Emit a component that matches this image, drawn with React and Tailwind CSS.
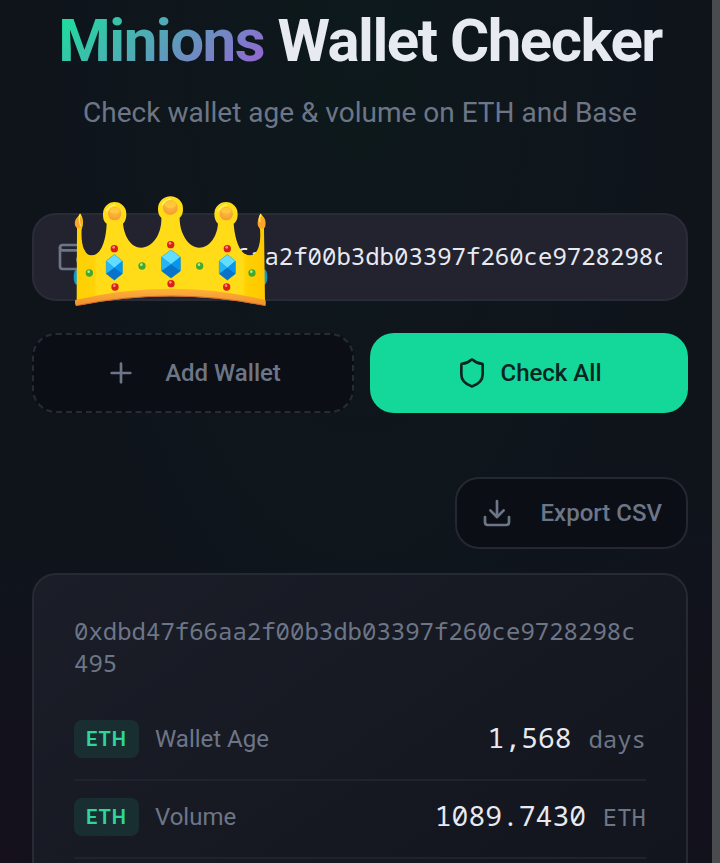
import { useState } from 'react';
import { Wallet, Plus, Shield, Download } from 'lucide-react';

const ADDRESS = '0xdbd47f66aa2f00b3db03397f260ce9728298c495';

const stats = [
  { chain: 'ETH', label: 'Wallet Age', value: '1,568', unit: 'days' },
  { chain: 'ETH', label: 'Volume', value: '1089.7430', unit: 'ETH' },
];

const redGems = [[283, 191], [452, 179], [622, 191], [285, 306], [453, 296], [620, 306]];
const greenGems = [[208, 264], [366, 243], [539, 243], [696, 264]];
const blueGems = [
  { x: 283, y: 247, w: 24, h: 38 },
  { x: 453, y: 237, w: 28, h: 42 },
  { x: 622, y: 247, w: 24, h: 38 },
];

function Gem({ x, y, w, h }) {
  const q = h / 2;
  return (
    <g>
      <path d={`M${x} ${y - h}L${x + w} ${y - q}V${y + q}L${x} ${y + h}L${x - w} ${y + q}V${y - q}Z`} fill="#0a9be8" stroke="#5aa58c" strokeWidth="3" />
      <path d={`M${x} ${y - h}L${x + w} ${y - q}L${x} ${y + 1}L${x - w} ${y - q}Z`} fill="#62dcff" />
      <path d={`M${x - w} ${y - q}L${x} ${y + 1}L${x - w} ${y + q}Z`} fill="#25b5f5" />
      <path d={`M${x + w} ${y - q}L${x} ${y + 1}L${x + w} ${y + q}Z`} fill="#0795ee" />
      <path d={`M${x} ${y + 1}L${x + w} ${y + q}L${x} ${y + h}L${x - w} ${y + q}Z`} fill="#0873c9" />
    </g>
  );
}

function Crown({ className }) {
  return (
    <svg viewBox="156 30 588 336" className={className} aria-hidden="true">
      <defs>
        <linearGradient id="crown-body" x1="0" x2="1" y1="0" y2="0">
          <stop offset="0" stopColor="#ffd000" />
          <stop offset="0.1" stopColor="#ffd20a" />
          <stop offset="0.11" stopColor="#ffdc17" />
          <stop offset="0.88" stopColor="#ffdc17" />
          <stop offset="0.9" stopColor="#ffd000" />
          <stop offset="1" stopColor="#ffc800" />
        </linearGradient>
        <linearGradient id="crown-band" x1="0" x2="0" y1="0" y2="1">
          <stop offset="0" stopColor="#ffb13b" />
          <stop offset="1" stopColor="#ee8f2c" />
        </linearGradient>
        <radialGradient id="crown-ball" cx="0.5" cy="0.3" r="0.7">
          <stop offset="0" stopColor="#ffc443" />
          <stop offset="1" stopColor="#f59a2e" />
        </radialGradient>
      </defs>
      <ellipse cx="170" cy="276" rx="9" ry="23" fill="#1499cf" />
      <ellipse cx="733" cy="276" rx="9" ry="23" fill="#1499cf" />
      <path
        d="M170 350L171 130C165 116 166 99 181 86C191 99 191 118 185 133C182 176 192 211 214 211C244 211 258 166 260 116C250 109 249 98 249 86A35 35 0 0 1 319 86C319 98 317 108 309 116C313 154 333 188 363 188C400 188 426 144 424 98C416 91 414 82 414 71A37 37 0 0 1 489 71C489 82 487 91 479 98C478 144 505 188 538 188C569 188 591 154 594 116C586 108 583 98 583 86A35 35 0 0 1 653 86C653 98 651 109 641 116C645 166 660 211 690 211C713 211 724 176 720 133C712 118 712 99 722 86C736 99 738 116 732 130L735 350Q453 292 170 350Z"
        fill="url(#crown-body)"
      />
      <path d="M175 96C166 99 162 113 166 123C171 132 184 133 187 121Q190 107 182 96Z" fill="#f9a62b" />
      <path d="M722 96C714 99 711 112 714 122C719 134 733 134 736 123Q739 107 731 96Z" fill="#f9a62b" />
      <path d="M180 88Q175 104 182 122" stroke="#ffe970" strokeWidth="4" strokeLinecap="round" fill="none" />
      <path d="M722 88Q717 101 719 110" stroke="#ffe970" strokeWidth="4" strokeLinecap="round" fill="none" />
      {[[284, 86, 20], [451, 68, 22], [619, 86, 20]].map(([x, y, r]) => (
        <g key={x}>
          <circle cx={x} cy={y} r={r} fill="url(#crown-ball)" />
          <ellipse cx={x} cy={y - 9} rx={r - 5} ry={r - 12} fill="#ffc83a" />
          <path d={`M${x - 24} ${y - 9}Q${x - 15} ${y - 24} ${x} ${y - 26}`} stroke="#fff176" strokeWidth="5" strokeLinecap="round" fill="none" />
        </g>
      ))}
      <path d="M166 345Q453 277 736 345Q739 355 736 363Q453 304 168 363Q163 355 166 345Z" fill="url(#crown-band)" />
      <path d="M178 360Q453 306 728 360" stroke="#ce6b30" strokeWidth="3" fill="none" />
      {redGems.map(([x, y]) => (
        <g key={`${x}-${y}`}>
          <circle cx={x} cy={y} r="11" fill="#d91f1b" />
          <circle cx={x - 2} cy={y - 4} r="4" fill="#ff8a80" />
        </g>
      ))}
      {greenGems.map(([x, y]) => (
        <g key={x}>
          <circle cx={x} cy={y} r="11" fill="#43a82e" />
          <circle cx={x - 2} cy={y - 4} r="4" fill="#b4ec91" />
        </g>
      ))}
      {blueGems.map((gem) => <Gem key={gem.x} {...gem} />)}
    </svg>
  );
}

function StatRow({ chain, label, value, unit }) {
  return (
    <div className="flex items-center justify-between gap-4 border-b-2 border-[#20222c] pt-4 pb-5">
      <dt className="flex items-center gap-4 text-2xl leading-10 text-[#6d7687]">
        <span className="rounded-lg bg-[#182e31] px-3 py-1 text-xl leading-[30px] font-semibold tracking-wider text-[#2fd69c]">
          {chain}
        </span>
        {label}
      </dt>
      <dd className="pb-1 font-['Droid_Sans_Mono','Noto_Sans_Mono','DejaVu_Sans_Mono',monospace] text-[28px] leading-9 whitespace-nowrap text-[#e8eaf2]">
        {value} <span className="text-2xl leading-none text-[#6d7687]">{unit}</span>
      </dd>
    </div>
  );
}

export default function App() {
  const [address, setAddress] = useState(ADDRESS);

  return (
    <div className="flex min-h-screen bg-[#0f141b] bg-[radial-gradient(ellipse_at_50%_0%,#0d191c_0%,transparent_60%),radial-gradient(ellipse_at_0%_100%,#15101b_0%,transparent_25%),radial-gradient(ellipse_at_100%_90%,#14111c_0%,transparent_25%)] font-[Roboto,sans-serif]">
      <main className="flex min-w-0 flex-1 flex-col pt-[5px] pr-6 pl-8">
        {/* Header */}
        <header className="text-center">
          <h1 className="text-6xl leading-[72px] font-bold tracking-tight whitespace-nowrap text-[#e8eaf2]">
            <span className="bg-linear-135/srgb from-[#14e69a] to-[#9b5fd6] bg-clip-text text-transparent">Minions</span> Wallet Checker
          </h1>
          <p className="mt-4 text-[28px] leading-10 text-[#6d7687]">Check wallet age &amp; volume on ETH and Base</p>
        </header>

        {/* Address input */}
        <div className="relative mt-20">
          <Wallet size={32} className="absolute top-7 left-6 text-[#6d7687]" aria-hidden="true" />
          <input
            type="text"
            aria-label="Wallet address"
            value={address}
            onChange={(e) => setAddress(e.target.value)}
            className="block h-[88px] w-full rounded-3xl border-2 border-[#292b36] bg-[#22232f] pr-6 pb-1 pl-[72px] font-['Droid_Sans_Mono','Noto_Sans_Mono','DejaVu_Sans_Mono',monospace] text-2xl text-[#e8eaf2] outline-none"
          />
          <Crown className="pointer-events-none absolute -top-[18px] left-10 w-[196px]" />
        </div>

        {/* Actions */}
        <div className="mt-8 flex gap-4 text-2xl font-medium">
          <button className="flex h-20 flex-1 items-center justify-center gap-7 rounded-3xl border-2 border-dashed border-[#282b34] bg-[#0b0e15] text-[#6d7687]">
            <Plus size={32} />
            Add Wallet
          </button>
          <button className="flex h-20 flex-1 items-center justify-center gap-3 rounded-3xl bg-[#14d89a] text-[#08251f]">
            <Shield size={32} />
            Check All
          </button>
        </div>

        <button className="mt-16 flex h-[72px] items-center gap-7 self-end rounded-3xl border-2 border-[#252831] bg-[#0b0e15] px-6 text-2xl font-medium text-[#6d7687]">
          <Download size={32} />
          Export CSV
        </button>

        {/* Result card */}
        <section className="mt-6 flex-1 rounded-t-3xl border-2 border-b-0 border-[#272933] bg-linear-145/srgb from-[#1b1d28] to-[#12151d] px-10 pt-10">
          <p className="font-['Droid_Sans_Mono','Noto_Sans_Mono','DejaVu_Sans_Mono',monospace] text-2xl leading-8 break-all text-[#6d7687]">
            {ADDRESS}
          </p>
          <dl className="mt-6">
            {stats.map((stat) => <StatRow key={stat.label} {...stat} />)}
          </dl>
        </section>
      </main>

      {/* Scrollbar strip */}
      <div className="w-2 shrink-0 bg-[#4a4b4e]" />
    </div>
  );
}
